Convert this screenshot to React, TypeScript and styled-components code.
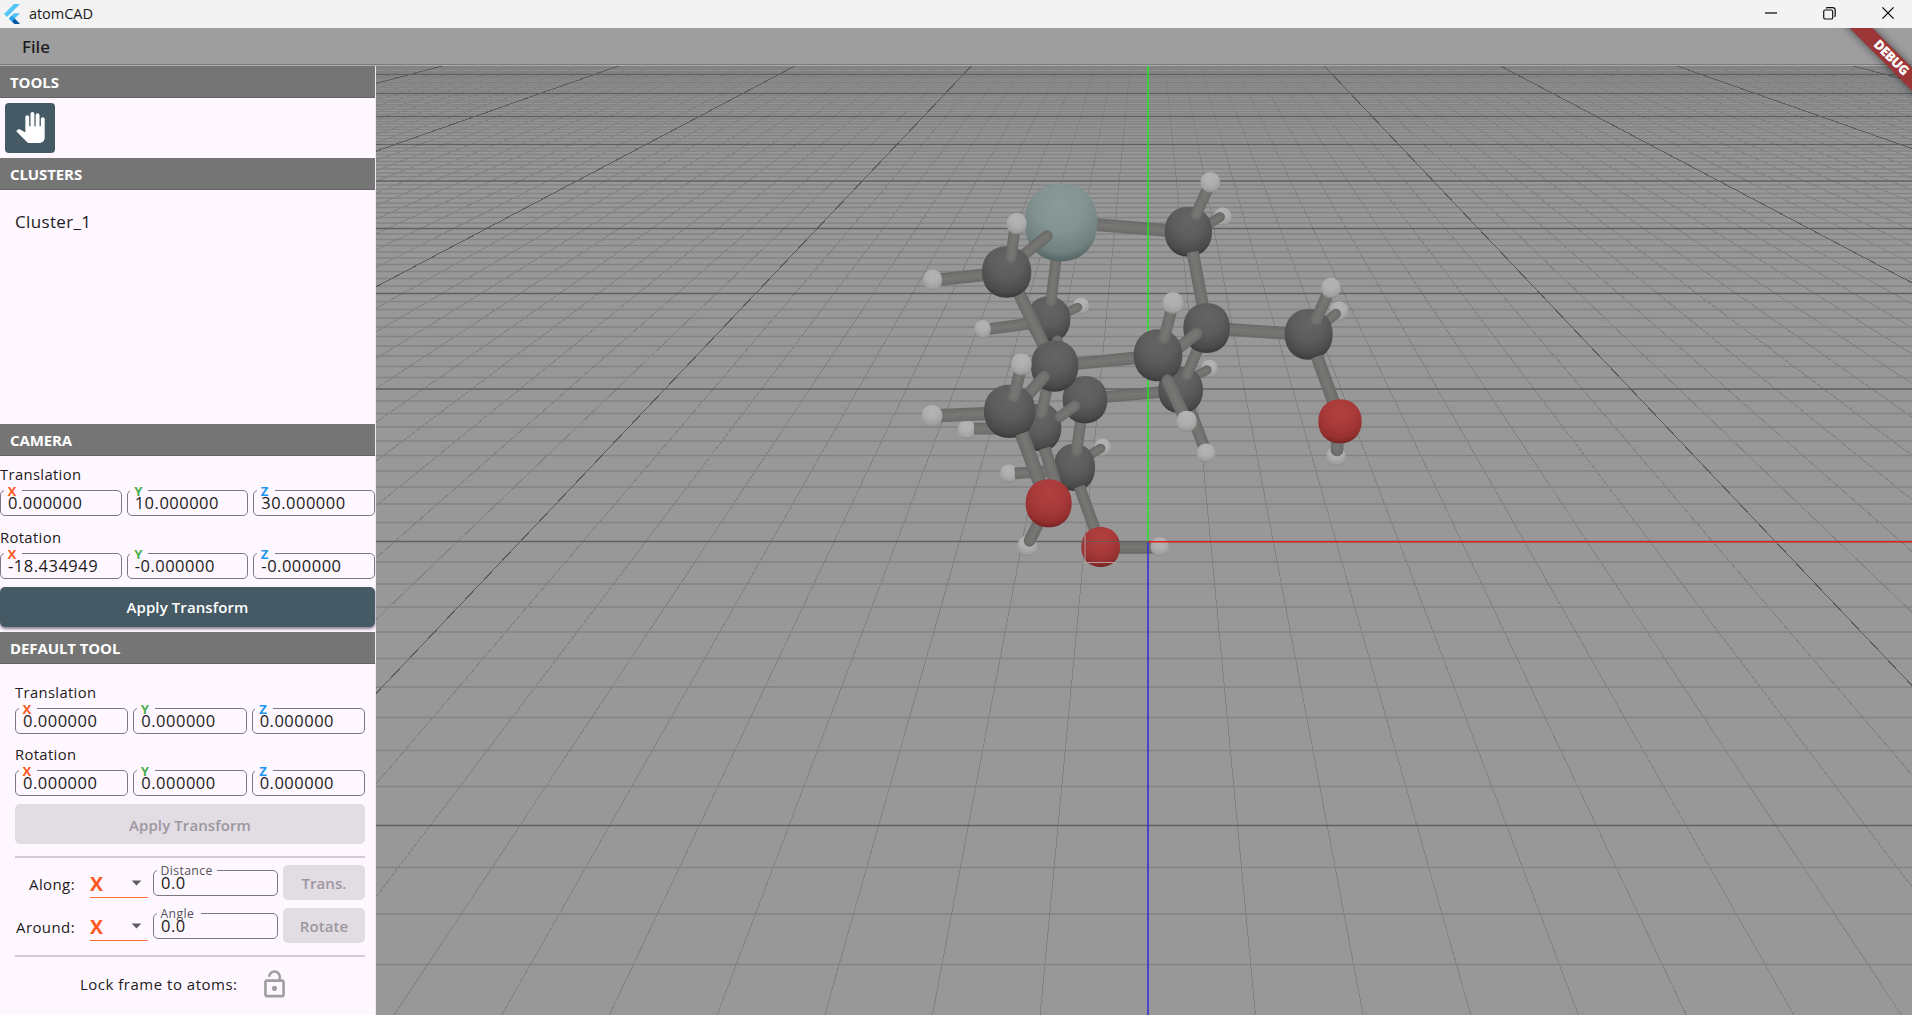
import React from 'react';
import styled, { createGlobalStyle } from 'styled-components';
import { MdPanTool, MdArrowDropDown } from 'react-icons/md';

const GlobalStyle = createGlobalStyle`
  * { box-sizing: border-box; }
  html, body, #root { margin: 0; height: 100%; }
  body {
    overflow: hidden;
    font-family: "Open Sans", "Noto Sans", sans-serif;
    color: #1d1b20;
  }
`;

const Window = styled.div`
  height: 1015px;
  width: 1912px;
  display: flex;
  flex-direction: column;
  position: relative;
  background: #9e9e9e;
`;

const TitleBar = styled.header`
  height: 28px;
  flex: none;
  display: flex;
  align-items: center;
  padding: 0 18px 0 4px;
  background: #f3f3f3;
  color: #191919;
`;

const WindowTitle = styled.span`
  font-size: 14.6px;
  line-height: 25px;
  padding-bottom: 2px;
  letter-spacing: -0.1px;
  margin: 0 auto 0 9px;
`;

const WindowControls = styled.div`
  display: flex;
  gap: 46px;
  padding-bottom: 2px;
`;

const MenuBar = styled.nav`
  height: 38px;
  flex: none;
  display: flex;
  align-items: center;
  padding-left: 22px;
  background: #9e9e9e;
  border-bottom: 1px solid #acacac;
  box-shadow: inset 0 -1px 0 #7b7b7b;
`;

const MenuItem = styled.button`
  border: 0;
  padding: 0;
  background: none;
  font: 500 17px "Noto Sans", "Open Sans", sans-serif;
  color: #1d1b20;
`;

const Body = styled.div`
  flex: 1;
  min-height: 0;
  display: flex;
`;

const Sidebar = styled.aside`
  width: 376px;
  flex: none;
  display: flex;
  flex-direction: column;
  background: #fef7ff;
  border-right: 1px solid #f0eaf0;
`;

const SectionTitle = styled.h2`
  margin: 0;
  height: 32px;
  flex: none;
  padding: 1px 10px 0;
  display: flex;
  align-items: center;
  background: #757575;
  border-bottom: 1px solid #646265;
  color: #fff;
  font-size: 15px;
  line-height: 20px;
  font-weight: 700;
  letter-spacing: -0.1px;
`;

const ToolBox = styled.div`
  height: 60px;
  padding: 5px;
`;

const ToolButton = styled.button`
  width: 50px;
  height: 50px;
  display: grid;
  place-items: center;
  border: 0;
  padding: 0 0 1px;
  border-radius: 4px;
  background: #455a64;
  color: #fff;
`;

const ClusterList = styled.div`
  height: 234px;
  padding: 19px 15px;
  font-size: 17px;
  line-height: 25px;
  letter-spacing: 0.35px;
`;

const CameraPanel = styled.div`
  height: 175.5px;
  display: flex;
  flex-direction: column;
`;

const ToolPanel = styled.div`
  flex: 1;
  padding: 19px 10px 0 15px;
  display: flex;
  flex-direction: column;
`;

const GroupLabel = styled.div<{ $top: number }>`
  margin-top: ${(p) => p.$top}px;
  height: 20px;
  font-size: 14.8px;
  line-height: 18px;
  letter-spacing: 0.35px;
`;

const VectorRow = styled.div<{ $top: number }>`
  margin-top: ${(p) => p.$top}px;
  height: 26px;
  display: flex;
  gap: 5px;
`;

const Field = styled.div`
  position: relative;
  flex: 1;
  height: 26px;
  padding-left: 7px;
  border: 1px solid #7c7781;
  border-radius: 5px;
  font-size: 16.5px;
  line-height: 24px;
  letter-spacing: 0.5px;
  white-space: nowrap;
`;

/* Floating label sitting in a notch of the field's top border. */
const Notch = styled.span<{ $color: string; $bold?: boolean; $width: number }>`
  position: absolute;
  left: 2.5px;
  top: -8px;
  width: ${(p) => p.$width}px;
  height: 17px;
  padding-left: 4px;
  color: ${(p) => p.$color};
  font-size: ${(p) => (p.$bold ? 13.2 : 12.2)}px;
  font-weight: ${(p) => (p.$bold ? 700 : 400)};
  line-height: 16px;
  letter-spacing: ${(p) => (p.$bold ? 0 : 0.4)}px;
  background: linear-gradient(#fef7ff, #fef7ff) 0 7px / 100% 3px no-repeat;
`;

const Value = styled.span`
  position: relative;
`;

const ActionButton = styled.button<{ $top: number; $height: number; $disabled?: boolean }>`
  margin-top: ${(p) => p.$top}px;
  height: ${(p) => p.$height}px;
  border: 0;
  padding: 1px 0 0;
  border-radius: 5px;
  font-family: inherit;
  font-size: 15px;
  font-weight: 600;
  letter-spacing: 0.1px;
  color: ${(p) => (p.$disabled ? '#9c979f' : '#fff')};
  background: ${(p) => (p.$disabled ? '#e2dce3' : '#455a64')};
  box-shadow: ${(p) => (p.$disabled ? 'none' : '0 2px 3px rgba(60, 50, 80, 0.6)')};
`;

const Divider = styled.hr`
  margin: 12px 0 7.5px;
  width: 100%;
  height: 1.5px;
  flex: none;
  border: 0;
  background: #d3ccd6;
`;

const AxisRows = styled.div`
  display: flex;
  flex-direction: column;
  gap: 8px;
`;

const AxisRow = styled.div`
  height: 35px;
  display: grid;
  grid-template-columns: 60px 68px 125px 82px;
  column-gap: 5px;
`;

const AxisRowLabel = styled.span`
  text-align: right;
  font-size: 15px;
  line-height: 38px;
  letter-spacing: 0.4px;
`;

const AxisSelect = styled.div`
  height: 32.5px;
  margin-left: 10px;
  padding-top: 6px;
  display: flex;
  align-items: center;
  justify-content: space-between;
  border-bottom: 1.5px solid #ff6a3a;
  color: #ff5722;
  font-size: 19.5px;
  line-height: 20px;
  font-weight: 700;
  svg { color: #5f5b62; margin-top: -3px; }
`;

const AxisInput = styled.div`
  padding-top: 4.5px;
  display: flex;
`;

const LockRow = styled.div`
  display: flex;
  align-items: center;
  height: 40px;
  padding-left: 65px;
  gap: 22px;
  font-size: 15px;
  letter-spacing: 0.5px;
`;

const Viewport = styled.main`
  flex: 1;
  min-width: 0;
  background: #989898;
  svg { display: block; }
`;

const DebugBanner = styled.div`
  position: absolute;
  top: 28px;
  right: 0;
  width: 90px;
  height: 90px;
  overflow: hidden;
`;

const DebugRibbon = styled.div`
  position: absolute;
  left: 9px;
  top: 21.5px;
  width: 120px;
  height: 15.6px;
  transform: rotate(45deg);
  background: #9c3535;
  box-shadow: 0 0 8px rgba(0, 0, 0, 0.55);
  color: #fff;
  font-size: 13.2px;
  font-weight: 800;
  line-height: 15.6px;
  text-align: center;
  letter-spacing: -0.4px;
`;

/* ---- 3D scene ---- */

const ORIGIN = { x: 1147.8, y: 541.7 };
const FOCAL = 1985;
const DIST = Math.sqrt(1000);
const SIN = 10 / DIST;
const COS = 30 / DIST;

const project = (x: number, z: number) => {
  const depth = DIST - z * COS;
  return [ORIGIN.x + (FOCAL * x) / depth, ORIGIN.y + (FOCAL * SIN * z) / depth];
};

function Grid() {
  const rows: number[] = [];
  for (let z = -90; z <= 14; z++) rows.push(z);
  const cols: number[] = [];
  for (let x = -60; x <= 60; x++) cols.push(x);
  const isMajor = (n: number) => n % 10 === 0;
  const rowPath = (ns: number[]) =>
    ns.map((z) => `M376 ${(Math.round(project(0, z)[1] * 2) / 2).toFixed(1)}H1912`).join('');
  const colPath = (ns: number[]) =>
    ns
      .map((x) => {
        const a = project(x, -90);
        const b = project(x, 14.2);
        return `M${a[0].toFixed(2)} ${a[1].toFixed(2)}L${b[0].toFixed(2)} ${b[1].toFixed(2)}`;
      })
      .join('');
  const minor = (n: number) => !isMajor(n);
  return (
    <g fill="none">
      <path d={rowPath(rows.filter(minor))} stroke="#838383" strokeWidth={1.4} />
      <path d={colPath(cols.filter(minor))} stroke="#828282" shapeRendering="crispEdges" />
      <path d={rowPath(rows.filter(isMajor))} stroke="#606060" strokeWidth={1.3} />
      <path d={colPath(cols.filter((n) => isMajor(n) && n !== 0))} stroke="#5c5c5c" shapeRendering="crispEdges" />
    </g>
  );
}

type Element = 'C' | 'H' | 'O' | 'Si';

/* Low-poly sphere silhouette: an ellipse bulging slightly toward its corners. */
function Atom({ e, x, y, r, ry }: { e: Element; x: number; y: number; r: number; ry?: number }) {
  const v = ry ?? r * 1.05;
  const n = 2.14;
  const pts: string[] = [];
  for (let i = 0; i < 60; i++) {
    const t = (i / 60) * Math.PI * 2;
    const c = Math.cos(t);
    const s = Math.sin(t);
    const px = x + r * Math.sign(c) * Math.abs(c) ** (2 / n);
    const py = y + v * Math.sign(s) * Math.abs(s) ** (2 / n);
    pts.push(`${px.toFixed(1)},${py.toFixed(1)}`);
  }
  return <polygon points={pts.join(' ')} fill={`url(#atom${e})`} />;
}

type BondProps = { p: [number, number, number, number]; w?: number; round?: boolean };

function Bond({ p, w = 35, round }: BondProps) {
  const [x1, y1, x2, y2] = p;
  return (
    <g strokeLinecap={round ? 'round' : 'butt'}>
      <line x1={x1} y1={y1} x2={x2} y2={y2} stroke="#6a6a69" strokeWidth={w} />
      <line x1={x1} y1={y1} x2={x2} y2={y2} stroke="#717170" strokeWidth={w * 0.75} />
      <line x1={x1} y1={y1} x2={x2} y2={y2} stroke="#777673" strokeWidth={w * 0.3} />
    </g>
  );
}

const shades: Record<Element, string[]> = {
  C: ['#646464', '#5d5d5d', '#4b4b4b', '#343434'],
  H: ['#b4b4b4', '#afafaf', '#a0a0a0', '#808080'],
  O: ['#b04040', '#a93a3a', '#963030', '#6c1d1d'],
  Si: ['#8a9a99', '#839392', '#6f807e', '#4b5a59'],
};

function Molecule() {
  return (
    <g transform="translate(900 150) scale(0.33333)">
      {/* silicon and right-hand bridge */}
      <Atom e="H" x={968} y={200} r={26} />
      <Bond p={[925, 222, 960, 201]} w={30} round />
      <Bond p={[588, 224, 800, 241]} w={38} />
      <Atom e="C" x={865} y={245} r={71} ry={75} />
      <Bond p={[888, 194, 925, 112]} w={34} round />
      <Atom e="H" x={931} y={97} r={29} />
      <Bond p={[878, 306, 909, 470]} w={37} />

      {/* right arm with hydroxyl */}
      <Atom e="H" x={1317} y={483} r={27} />
      <Bond p={[1280, 515, 1308, 491]} w={30} round />
      <Bond p={[985, 538, 1160, 550]} w={38} />
      <Atom e="C" x={1226} y={553} r={72} ry={76} />
      <Bond p={[1249, 508, 1283, 432]} w={36} round />
      <Atom e="H" x={1293} y={414} r={29} />
      <Bond p={[1251, 620, 1304, 765]} w={38} />
      <Atom e="H" x={1308} y={918} r={28} />
      <Bond p={[1313, 860, 1311, 900]} w={38} round />
      <Atom e="O" x={1320} y={814} r={65} ry={66} />

      {/* back carbon below the right ring */}
      <Atom e="H" x={928} y={656} r={25} />
      <Bond p={[890, 676, 921, 660]} w={28} round />
      <Bond p={[870, 780, 912, 890]} w={36} />
      <Atom e="H" x={918} y={909} r={27} />
      <Bond p={[600, 742, 785, 726]} w={35} />
      <Atom e="C" x={842} y={720} r={67} ry={70} />
      <Bond p={[896, 590, 861, 675]} w={34} round />

      <Atom e="C" x={920} y={534} r={70} ry={75} />

      {/* lower back carbon and hydroxyl */}
      <Atom e="H" x={327} y={971} r={26} />
      <Bond p={[345, 970, 470, 962]} w={35} />
      <Atom e="H" x={607} y={892} r={25} />
      <Bond p={[570, 915, 602, 895]} w={28} round />
      <Atom e="C" x={523} y={952} r={62} ry={71} />
      <Bond p={[538, 1010, 586, 1142]} w={35} />
      <Bond p={[655, 1192, 762, 1192]} w={38} />
      <Atom e="H" x={779} y={1190} r={27} />
      <Atom e="O" x={602} y={1191} r={58} ry={60} />
      <Bond p={[544, 800, 530, 902]} w={34} round />

      {/* second back carbon under silicon */}
      <Atom e="H" x={543} y={468} r={24} />
      <Bond p={[500, 488, 533, 472]} w={28} round />
      <Bond p={[268, 537, 395, 520]} w={35} />
      <Atom e="H" x={248} y={537} r={24} ry={27} />
      <Atom e="C" x={446} y={508} r={65} ry={69} />
      <Bond p={[469, 320, 453, 454]} w={33} round />
      <Bond p={[472, 572, 500, 680]} w={32} round />

      {/* left ring */}
      <Atom e="C" x={555} y={749} r={67} ry={71} />
      <Atom e="H" x={200} y={839} r={27} />
      <Bond p={[222, 836, 380, 836]} w={35} />
      <Atom e="C" x={422} y={832} r={62} ry={72} />
      <Bond p={[480, 800, 524, 768]} w={33} round />
      <Bond p={[434, 895, 470, 1015]} w={37} />
      <Bond p={[444, 700, 425, 790]} w={34} round />
      <Bond p={[530, 641, 705, 624]} w={37} />
      <Bond p={[355, 425, 440, 605]} w={38} />
      <Atom e="C" x={464} y={648} r={71} ry={77} />

      {/* silicon with the front-left carbon */}
      <Atom e="Si" x={483} y={217} r={109} ry={117} />
      <Bond p={[365, 320, 441, 258]} w={34} round />
      <Bond p={[118, 389, 250, 375]} w={38} />
      <Atom e="C" x={320} y={366} r={74} ry={77} />
      <Bond p={[333, 322, 344, 240]} w={34} round />
      <Atom e="H" x={350} y={221} r={30} />
      <Atom e="H" x={98} y={390} r={28} ry={31} />

      {/* front-left lower carbon */}
      <Bond p={[385, 733, 432, 680]} w={36} round />
      <Bond p={[115, 797, 258, 791]} w={40} />
      <Bond p={[360, 840, 424, 1010]} w={41} />
      <Atom e="C" x={329} y={784} r={77} ry={80} />
      <Bond p={[366, 850, 418, 995]} w={40} />
      <Bond p={[342, 740, 360, 665]} w={36} round />
      <Atom e="H" x={364} y={643} r={31} />
      <Atom e="H" x={96} y={798} r={31} />
      <Atom e="H" x={382} y={1188} r={29} />
      <Bond p={[425, 1100, 389, 1172]} w={36} round />
      <Atom e="O" x={446} y={1060} r={69} ry={72} />
    </g>
  );
}

/* The carbon nearest the viewer hides the vertical axis behind it. */
function FrontCarbon() {
  return (
    <g transform="translate(900 150) scale(0.33333)">
      <Bond p={[838, 592, 890, 550]} w={36} round />
      <Atom e="C" x={774} y={616} r={73} ry={78} />
      <Bond p={[792, 565, 814, 482]} w={35} round />
      <Atom e="H" x={819} y={459} r={31} />
      <Bond p={[803, 692, 853, 800]} w={38} round />
      <Atom e="H" x={860} y={814} r={30} />
    </g>
  );
}

function Scene() {
  return (
    <svg width="1536" height="949" viewBox="376 66 1536 949">
      <defs>
        {(Object.keys(shades) as Element[]).map((e) => (
          <radialGradient key={e} id={`atom${e}`} cx="0.5" cy="0.28" r="0.76">
            <stop offset="0" stopColor={shades[e][0]} />
            <stop offset="0.45" stopColor={shades[e][1]} />
            <stop offset="0.8" stopColor={shades[e][2]} />
            <stop offset="1" stopColor={shades[e][3]} />
          </radialGradient>
        ))}
      </defs>
      <Grid />
      <Molecule />
      <g fill="none">
        <path d="M1081 541.5H1148" stroke="#5e5e5e" strokeOpacity={0.8} />
        <path d="M1083 562.5H1117M1085 535V565" stroke="#b09a9a" />
        <path d="M1148 541.5V66" stroke="#22e622" strokeWidth={1.5} />
        <path d="M1148 541.5V1015" stroke="#2a2ae0" strokeWidth={1.5} />
        <path d="M1148 541.7H1912" stroke="#dc2222" strokeWidth={1.6} />
      </g>
      <FrontCarbon />
    </svg>
  );
}

/* ---- chrome ---- */

function FlutterMark() {
  return (
    <svg width="16" height="20" viewBox="0 0 16 20">
      <path d="M10 0h6L3 13 0 10z" fill="#54c5f8" />
      <path d="M10 9.3h6l-5.2 5.2-3 3-3-3z" fill="#54c5f8" />
      <path d="M7.8 17.4l3-3L16 20h-5.6z" fill="#01579b" />
      <path d="M4.8 14.5l3-3 3 3-3 3z" fill="#29a0e8" />
    </svg>
  );
}

function LockOpenIcon() {
  return (
    <svg width="31" height="31" viewBox="0 0 24 24" fill="#9e9e9e">
      <path d="M12 17c1.1 0 2-.9 2-2s-.9-2-2-2-2 .9-2 2 .9 2 2 2zm6-9h-1V6c0-2.76-2.24-5-5-5S7 3.24 7 6h1.9c0-1.71 1.39-3.1 3.1-3.1 1.71 0 3.1 1.39 3.1 3.1v2H6c-1.1 0-2 .9-2 2v10c0 1.1.9 2 2 2h12c1.1 0 2-.9 2-2V10c0-1.1-.9-2-2-2zm0 12H6V10h12v10z" />
    </svg>
  );
}

const AXES = [
  { name: 'X', color: '#ff5722' },
  { name: 'Y', color: '#4caf50' },
  { name: 'Z', color: '#2196f3' },
];

function VectorInput({ values, top }: { values: string[]; top: number }) {
  return (
    <VectorRow $top={top}>
      {AXES.map((a, i) => (
        <Field key={a.name}>
          <Notch $color={a.color} $bold $width={18}>{a.name}</Notch>
          <Value>{values[i]}</Value>
        </Field>
      ))}
    </VectorRow>
  );
}

function AxisAction({ label, field, notch, action }: { label: string; field: string; notch: number; action: string }) {
  return (
    <AxisRow>
      <AxisRowLabel>{label}</AxisRowLabel>
      <AxisSelect>
        X
        <MdArrowDropDown size={23} />
      </AxisSelect>
      <AxisInput>
        <Field>
          <Notch $color="#55515a" $width={notch}>{field}</Notch>
          <Value>0.0</Value>
        </Field>
      </AxisInput>
      <ActionButton $top={0} $height={35} $disabled>{action}</ActionButton>
    </AxisRow>
  );
}

export default function App() {
  const zeros = ['0.000000', '0.000000', '0.000000'];
  return (
    <>
      <GlobalStyle />
      <Window>
        <TitleBar>
          <FlutterMark />
          <WindowTitle>atomCAD</WindowTitle>
          <WindowControls>
            <svg width="12" height="12" viewBox="0 0 12 12"><path d="M0 6h12" stroke="#000" strokeWidth="1.2" /></svg>
            <svg width="13" height="13" viewBox="0 0 13 13" fill="none" stroke="#111" strokeWidth="1.2">
              <rect x="0.7" y="3" width="9" height="9" rx="1.6" />
              <path d="M3 1.4q.6-.8 1.6-.8h5q2.6 0 2.6 2.6v5q0 1-.8 1.6" />
            </svg>
            <svg width="12" height="12" viewBox="0 0 12 12"><path d="M.4.4l11.2 11.2M11.6.4L.4 11.6" stroke="#000" strokeWidth="1.2" /></svg>
          </WindowControls>
        </TitleBar>
        <MenuBar>
          <MenuItem>File</MenuItem>
        </MenuBar>
        <Body>
          <Sidebar>
            <SectionTitle>TOOLS</SectionTitle>
            <ToolBox>
              <ToolButton><MdPanTool size={31} /></ToolButton>
            </ToolBox>
            <SectionTitle>CLUSTERS</SectionTitle>
            <ClusterList>Cluster_1</ClusterList>
            <SectionTitle>CAMERA</SectionTitle>
            <CameraPanel>
              <GroupLabel $top={9}>Translation</GroupLabel>
              <VectorInput top={5} values={['0.000000', '10.000000', '30.000000']} />
              <GroupLabel $top={12}>Rotation</GroupLabel>
              <VectorInput top={5} values={['-18.434949', '-0.000000', '-0.000000']} />
              <ActionButton $top={7.5} $height={40}>Apply Transform</ActionButton>
            </CameraPanel>
            <SectionTitle>DEFAULT TOOL</SectionTitle>
            <ToolPanel>
              <GroupLabel $top={0}>Translation</GroupLabel>
              <VectorInput top={5.5} values={zeros} />
              <GroupLabel $top={11}>Rotation</GroupLabel>
              <VectorInput top={5} values={zeros} />
              <ActionButton $top={8} $height={40} $disabled>Apply Transform</ActionButton>
              <Divider />
              <AxisRows>
                <AxisAction label="Along:" field="Distance" notch={60} action="Trans." />
                <AxisAction label="Around:" field="Angle" notch={44} action="Rotate" />
              </AxisRows>
              <Divider />
              <LockRow>
                Lock frame to atoms:
                <LockOpenIcon />
              </LockRow>
            </ToolPanel>
          </Sidebar>
          <Viewport>
            <Scene />
          </Viewport>
        </Body>
        <DebugBanner>
          <DebugRibbon>DEBUG</DebugRibbon>
        </DebugBanner>
      </Window>
    </>
  );
}
